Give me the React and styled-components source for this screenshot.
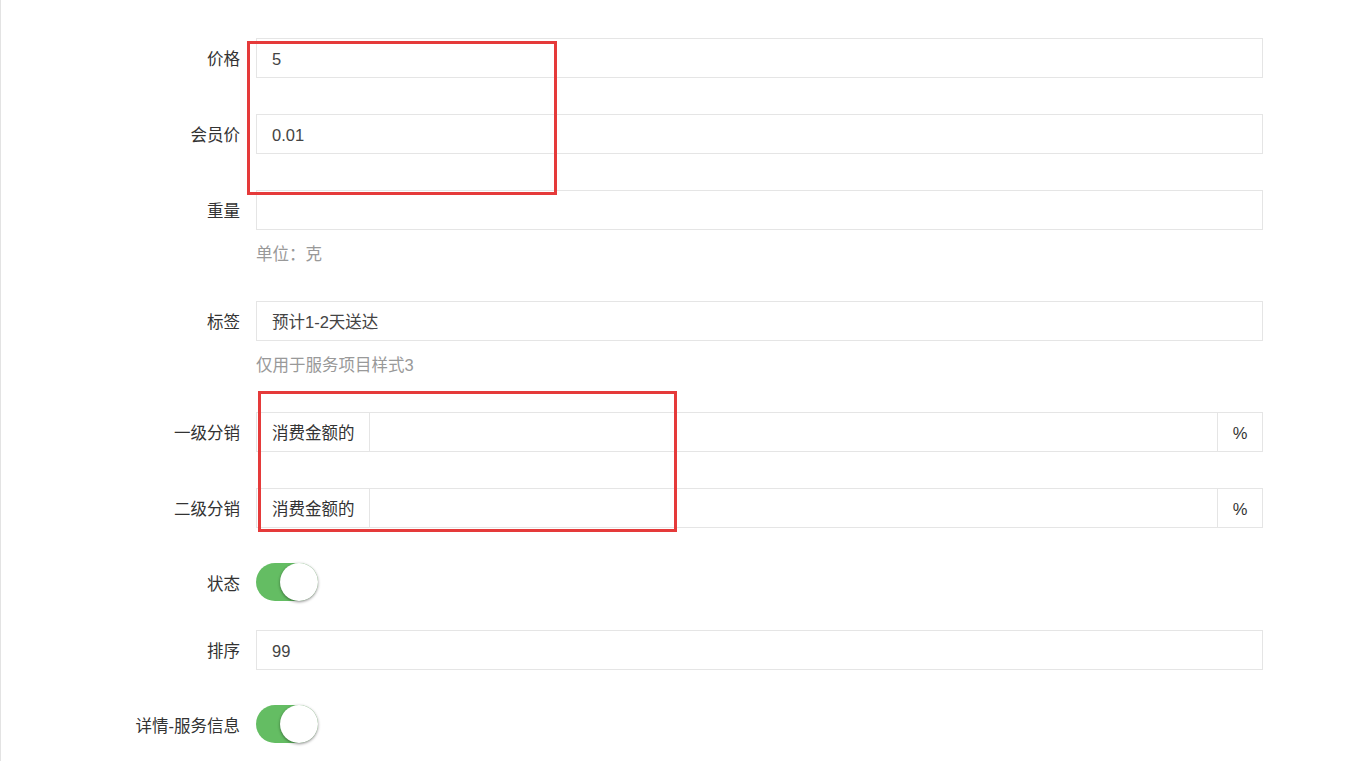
import styled, { createGlobalStyle } from "styled-components";

const GlobalStyle = createGlobalStyle`
  html, body {
    margin: 0;
    padding: 0;
    background: #fff;
  }
  body {
    font-family: "Liberation Sans", "Noto Sans CJK SC", sans-serif;
    font-size: 16.5px;
    color: #333;
  }
`;

const Page = styled.div`
  position: relative;
  min-height: 761px;
  border-left: 1px solid #e3e3e3;
  padding-top: 38px;
  box-sizing: border-box;
`;

const Form = styled.div`
  display: flex;
  flex-direction: column;
`;

const Row = styled.div`
  display: grid;
  grid-template-columns: 239px 1007px;
  column-gap: 16px;
  margin-bottom: ${(p) => p.$gap || 36}px;
`;

const Label = styled.label`
  box-sizing: border-box;
  text-align: right;
  padding-top: 2px;
  line-height: ${(p) => (p.$h || 40) - 2}px;
  height: ${(p) => p.$h || 40}px;
  color: #333;
  white-space: nowrap;
`;

const Field = styled.div`
  display: flex;
  flex-direction: column;
`;

const Input = styled.div`
  height: 40px;
  box-sizing: border-box;
  border: 1px solid #e5e5e5;
  padding: 2px 15px 0;
  line-height: 36px;
  color: #444;
  flex: ${(p) => (p.$grow ? "1 1 auto" : "none")};
`;

const Help = styled.div`
  margin-top: 13px;
  line-height: 22px;
  color: #999;
`;

const Group = styled.div`
  display: flex;
  height: 40px;
`;

const Addon = styled.div`
  box-sizing: border-box;
  border: 1px solid #e5e5e5;
  ${(p) => (p.$side === "left" ? "border-right: none;" : "border-left: none;")}
  padding: 2px ${(p) => (p.$side === "left" ? 15 : 0)}px 0;
  line-height: 36px;
  color: #333;
  white-space: nowrap;
  flex: none;
  width: ${(p) => p.$w}px;
  text-align: ${(p) => (p.$side === "left" ? "left" : "center")};
`;

const Switch = styled.div`
  position: relative;
  width: 62px;
  height: 38px;
  margin-top: -1px;
  border-radius: 19px;
  background: #64bd63;
`;

const Knob = styled.span`
  position: absolute;
  right: 0;
  top: 0;
  width: 38px;
  height: 38px;
  border-radius: 50%;
  background: #fff;
  box-shadow: 0 1px 3px rgba(0, 0, 0, 0.45);
`;

const Mark = styled.div`
  position: absolute;
  border: 3px solid #e53a3a;
  box-sizing: border-box;
  pointer-events: none;
`;

function TextRow({ label, value, help }) {
  return (
    <Row>
      <Label>{label}</Label>
      <Field>
        <Input>{value}</Input>
        {help && <Help>{help}</Help>}
      </Field>
    </Row>
  );
}

function RateRow({ label }) {
  return (
    <Row>
      <Label>{label}</Label>
      <Group>
        <Addon $side="left" $w={113}>消费金额的</Addon>
        <Input $grow />
        <Addon $side="right" $w={45}>%</Addon>
      </Group>
    </Row>
  );
}

function SwitchRow({ label, gap }) {
  return (
    <Row $gap={gap}>
      <Label $h={38}>{label}</Label>
      <Switch>
        <Knob />
      </Switch>
    </Row>
  );
}

export default function App() {
  return (
    <>
      <GlobalStyle />
      <Page>
        <Form>
          <TextRow label="价格" value="5" />
          <TextRow label="会员价" value="0.01" />
          <TextRow label="重量" value="" help="单位：克" />
          <TextRow label="标签" value="预计1-2天送达" help="仅用于服务项目样式3" />
          <RateRow label="一级分销" />
          <RateRow label="二级分销" />
          <SwitchRow label="状态" gap={28} />
          <TextRow label="排序" value="99" />
          <SwitchRow label="详情-服务信息" />
        </Form>
        <Mark style={{ left: 246, top: 41, width: 310, height: 154 }} />
        <Mark style={{ left: 257, top: 391, width: 419, height: 141 }} />
      </Page>
    </>
  );
}
